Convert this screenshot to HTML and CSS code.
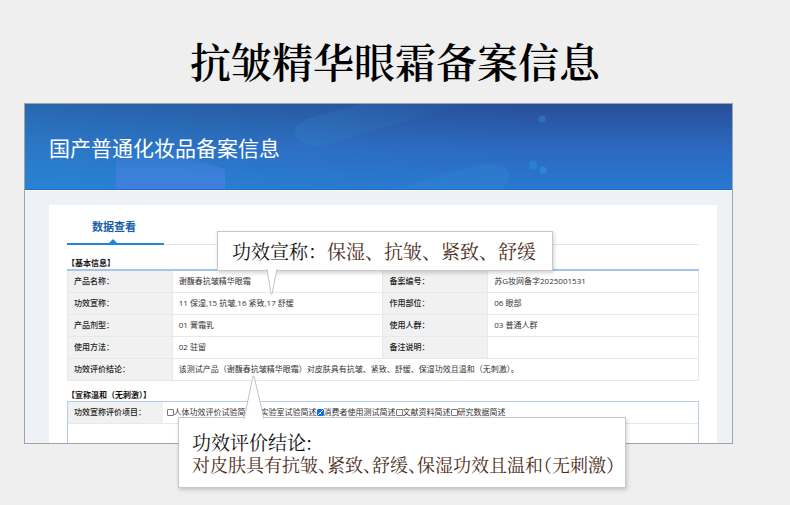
FILE: index.html
```html
<!DOCTYPE html>
<html lang="zh-CN">
<head>
<meta charset="utf-8">
<title>抗皱精华眼霜备案信息</title>
<link rel="stylesheet" href="styles.css">
</head>
<body>
<main class="page">
  <h1 class="page-title">抗皱精华眼霜备案信息</h1>
  <section class="record">
    <header class="banner">
      <svg class="banner-art" viewBox="0 0 707 85" preserveAspectRatio="none" aria-hidden="true">
        <defs>
          <linearGradient id="box" x1="0" y1="0" x2="0" y2="1">
            <stop offset="0" stop-color="#4080dc" stop-opacity="0.2"/>
            <stop offset="0.5" stop-color="#4080dc" stop-opacity="0.8"/>
            <stop offset="1" stop-color="#4080dc"/>
          </linearGradient>
          <linearGradient id="pill" x1="0" y1="0" x2="1" y2="0">
            <stop offset="0" stop-color="#3b8ad0" stop-opacity="0.22"/>
            <stop offset="1" stop-color="#3b8ad0" stop-opacity="0.05"/>
          </linearGradient>
        </defs>
        <path d="M91 50H150L200 65V85H91Z" fill="url(#box)"/>
        <path d="M335 0L285 14C262 22 264 40 292 42Q300 42 308 39L435 0Z" fill="url(#pill)"/>
        <path d="M370 85L450 61C480 54 495 70 477 85Z" fill="#3d95dd" fill-opacity="0.18"/>
        <circle cx="517" cy="15" r="3.5" fill="#3187d5" fill-opacity="0.5"/>
        <circle cx="508" cy="61" r="4.5" fill="#2b8be0" fill-opacity="0.5"/>
        <circle cx="518" cy="66" r="3.5" fill="#2b8fe6" fill-opacity="0.7"/>
      </svg>
      <h2 class="banner-title">国产普通化妆品备案信息</h2>
    </header>
    <div class="record-body">
      <div class="sheet">
        <nav class="tabs"><a class="tab" href="#basic">数据查看</a></nav>
        <h3 class="group-title" id="basic">【基本信息】</h3>
        <table class="info">
          <colgroup><col class="c-label"><col class="c-value"><col class="c-label"><col class="c-value"></colgroup>
          <tr><th scope="row">产品名称：</th><td>谢馥春抗皱精华眼霜</td><th scope="row">备案编号：</th><td>苏G妆网备字2025001531</td></tr>
          <tr><th scope="row">功效宣称：</th><td>11 保湿,15 抗皱,16 紧致,17 舒缓</td><th scope="row">作用部位：</th><td>06 眼部</td></tr>
          <tr><th scope="row">产品剂型：</th><td>01 膏霜乳</td><th scope="row">使用人群：</th><td>03 普通人群</td></tr>
          <tr><th scope="row">使用方法：</th><td>02 驻留</td><th scope="row">备注说明：</th><td></td></tr>
          <tr><th scope="row">功效评价结论：</th><td colspan="3">该测试产品（谢馥春抗皱精华眼霜）对皮肤具有抗皱、紧致、舒缓、保湿功效且温和（无刺激）。</td></tr>
        </table>
        <h3 class="group-title">【宣称温和（无刺激）】</h3>
        <table class="info claims">
          <colgroup><col class="c-item"><col></colgroup>
          <tr><th scope="row">功效宣称评价项目：</th><td><div class="options">
            <label><input type="checkbox">人体功效评价试验简述</label>
            <label><input type="checkbox">实验室试验简述</label>
            <label><input type="checkbox" checked>消费者使用测试简述</label>
            <label><input type="checkbox">文献资料简述</label>
            <label><input type="checkbox">研究数据简述</label>
          </div></td></tr>
          <tr><td colspan="2"></td></tr>
        </table>
      </div>
    </div>
    <aside class="callout callout-claim">
      <svg class="tail-down" viewBox="0 0 12 26" aria-hidden="true"><path d="M1 0L5 25H6L11 0" fill="#fff" stroke="#c4c4c4"/></svg>
      <p>功效宣称：<span>保湿、抗皱、紧致、舒缓</span></p>
    </aside>
    <aside class="callout callout-result">
      <svg class="tail-up" viewBox="0 0 22 44" aria-hidden="true"><path d="M1 44L10 1H11L21 44" fill="#fff" stroke="#c4c4c4"/></svg>
      <p>功效评价结论:</p>
      <p class="result"><span>对皮肤具有抗皱、紧致、舒缓、保湿功效且温和（无刺激）</span></p>
    </aside>
  </section>
</main>
</body>
</html>
```
FILE: styles.css
```css
* {
  box-sizing: border-box;
}

body {
  margin: 0;
  background: #efefef;
  color: #333;
  font-family: "Open Sans", "Noto Sans CJK SC", sans-serif;
}

h1, h2, h3, p {
  margin: 0;
}

.page {
  padding: 31px 57px 61px 24px;
}

.page-title {
  margin: 0 -33px 12px 0;
  text-align: center;
  color: #000;
  font: 600 41px/60px "Noto Serif CJK SC", "Noto Sans CJK SC", serif;
}

.record {
  position: relative;
  border: 1px solid #a0a3a8;
}

.banner {
  position: relative;
  padding: 29px 24px 26px;
  border-bottom: 1px solid #1c6dc5;
  background:
    linear-gradient(90deg, rgba(42, 150, 215, 0.35), rgba(42, 140, 215, 0.1) 50%, transparent 70%),
    linear-gradient(180deg, #284f98, #2c68be 50%, #2879d0);
}

.banner-art {
  position: absolute;
  inset: 0;
  width: 100%;
  height: 100%;
}

.banner-title {
  position: relative;
  color: #fff;
  font-size: 21px;
  line-height: 30px;
  font-weight: 400;
}

.record-body {
  padding: 14px 15px 0 24px;
  border-top: 1px solid #fff;
  background: #eef2f6;
}

.sheet {
  padding: 12px 18px 0;
  background: #fff;
}

.tabs {
  display: flex;
  margin-bottom: 4px;
  border-bottom: 1px solid #e3e5e8;
}

.tab {
  position: relative;
  padding: 0 28px 6px 25px;
  margin-bottom: -1px;
  border-bottom: 2px solid #2485d5;
  color: #155fa9;
  font-size: 11px;
  line-height: 20px;
  font-weight: 700;
  text-decoration: none;
}

.tab::after {
  content: "";
  position: absolute;
  left: 42px;
  bottom: 0;
  border: solid transparent;
  border-width: 0 4px 4px;
  border-bottom-color: #2485d5;
}

.group-title {
  padding-top: 8px;
  color: #111;
  font-size: 8px;
  line-height: 12px;
  font-weight: 700;
}

.info {
  width: 100%;
  table-layout: fixed;
  border-collapse: collapse;
  border-top: 2px solid #a5c3ee;
  font-size: 8px;
  line-height: 12px;
}

.c-label {
  width: 16.6%;
}

.c-value {
  width: 33.4%;
}

.c-item {
  width: 15%;
}

.info th,
.info td {
  height: 22px;
  padding: 0 6px;
  border: 1px solid #e8e8e8;
  text-align: left;
  white-space: nowrap;
}

.info th {
  background: #f1f1f1;
  color: #222;
  font-weight: 500;
}

.info.claims {
  border-collapse: separate;
  border-spacing: 0;
  border: 1px solid #b5ccec;
  border-bottom: 0;
}

.info.claims th,
.info.claims td {
  border-width: 0 0 1px;
}

.info.claims td {
  padding: 0 4px;
}

.info.claims tr:last-child td {
  height: 19px;
  border-bottom: 0;
}

.options,
.options label {
  display: flex;
  align-items: center;
}

.options input {
  appearance: none;
  width: 7px;
  height: 7px;
  margin: 0;
  border: 1px solid #777;
  border-radius: 1px;
  background: #fff;
}

.options input:checked {
  border-color: #0b6fe8;
  background: linear-gradient(135deg, #0b6fe8 45%, #fff 45%, #fff 60%, #0b6fe8 60%);
}

.callout {
  position: absolute;
  border: 1px solid #c8c8c8;
  background: #fff;
  box-shadow: 1px 2px 4px rgba(0, 0, 0, 0.18);
  color: #111;
  font-family: "Noto Serif CJK SC", "Noto Sans CJK SC", serif;
  font-size: 19px;
  line-height: 23px;
  white-space: nowrap;
}

.callout span {
  color: #4b2c20;
}

.callout-claim {
  top: 127px;
  left: 192px;
  padding: 7px 16px 8px 14px;
}

.callout-result {
  top: 313px;
  left: 153px;
  padding: 12px 10px 11px 13px;
}

.result {
  font-size: 18px;
  font-feature-settings: "halt";
}

.tail-down,
.tail-up {
  position: absolute;
}

.tail-down {
  top: 100%;
  left: 48px;
  width: 12px;
  height: 26px;
  margin-top: -1px;
}

.tail-up {
  bottom: 100%;
  left: 64px;
  width: 22px;
  height: 44px;
  margin-bottom: -1px;
}
```
